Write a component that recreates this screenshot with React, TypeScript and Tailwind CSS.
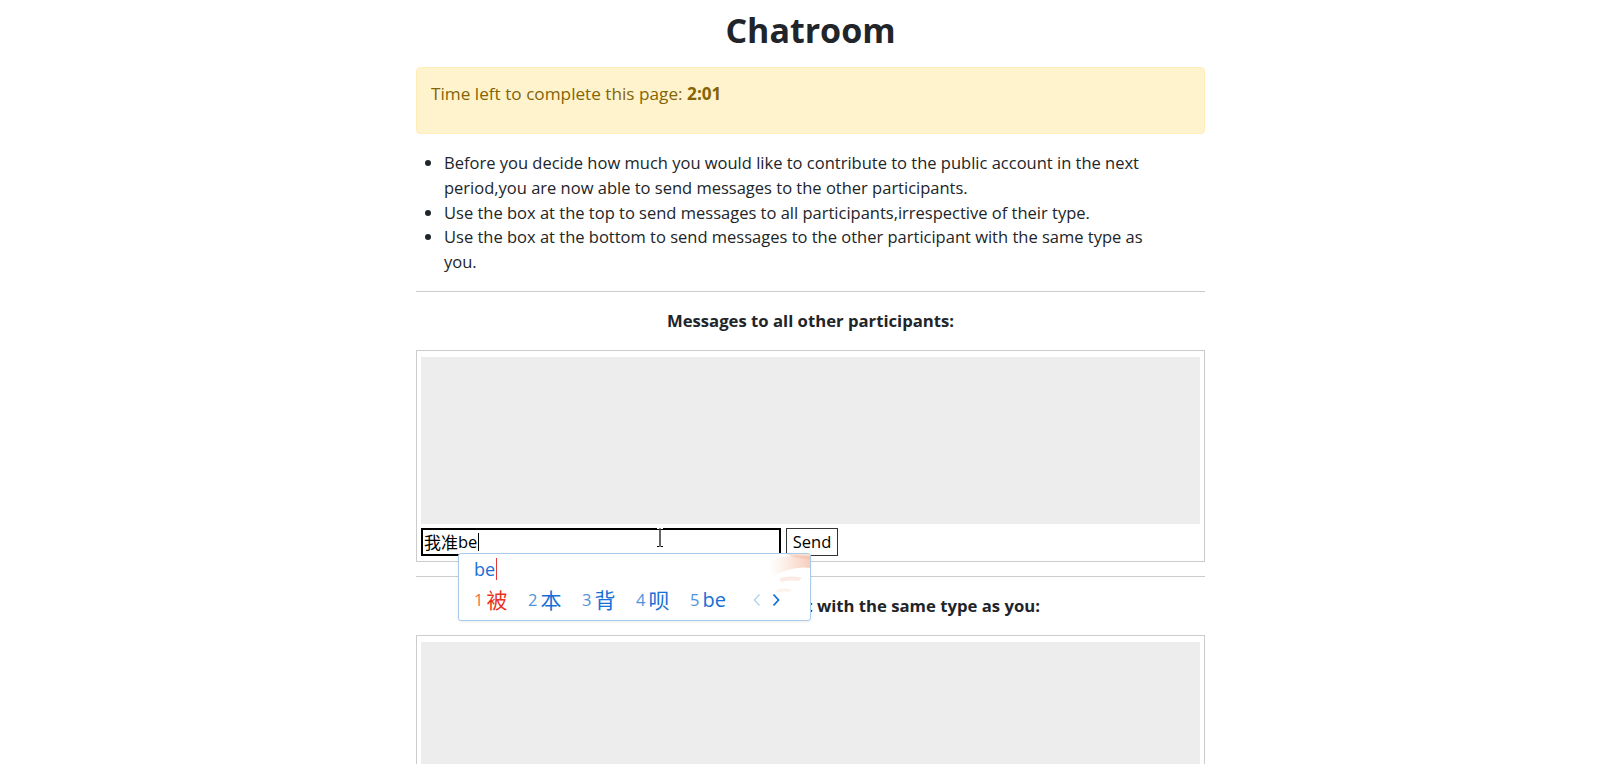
import React from "react";

const FONT = { fontFamily: '"Open Sans", "Noto Sans CJK SC", sans-serif' };

function ChatBox({ children }: { children?: React.ReactNode }) {
  return (
    <div className="border border-[#cccccc] px-[4px] pt-[6px] pb-[5px]">
      <div className="h-[167px] bg-[#ededed]" />
      <div className="mt-[4px] flex items-center gap-[5px]">
        <div className="relative">
          {children}
        </div>
        <button className="h-[28px] w-[52px] border border-[#333] bg-white text-[16.5px] leading-none text-black">
          Send
        </button>
      </div>
    </div>
  );
}

function Candidate({ n, ch, first, latin }: { n: string; ch: string; first?: boolean; latin?: boolean }) {
  return (
    <div className="flex w-[54px] shrink-0 items-center">
      <span className={`mr-[3px] text-[16.5px] leading-none ${first ? "text-[#f0703c]" : "text-[#4f93dc]"}`}>{n}</span>
      <span
        className={`${latin ? "text-[20px] font-medium" : "text-[21px]"} leading-none ${first ? "text-[#e8341c]" : "text-[#1670d6]"}`}
        style={{ fontFamily: latin ? '"Open Sans", sans-serif' : '"Noto Sans CJK SC", "Open Sans", sans-serif' }}
      >
        {ch}
      </span>
    </div>
  );
}

function ImePopup() {
  return (
    <div className="absolute left-[37px] top-[25px] z-10 h-[68px] w-[353px] overflow-hidden rounded-[3px] border border-[#a9cbea] bg-white shadow-[0_1px_3px_rgba(0,0,0,0.08)]">
      <svg className="absolute right-0 top-0" width="60" height="50" viewBox="0 0 60 50">
        <defs>
          <linearGradient id="pk" x1="0" y1="0" x2="1" y2="0">
            <stop offset="0" stopColor="#fbe0d4" stopOpacity="0" />
            <stop offset="0.6" stopColor="#f7cdb9" stopOpacity="0.55" />
            <stop offset="1" stopColor="#f3b9a0" stopOpacity="0.7" />
          </linearGradient>
        </defs>
        <path d="M18 8 C30 2 45 0 60 2 L60 14 C48 12 34 16 24 22 C20 18 16 12 18 8Z" fill="url(#pk)" />
        <path d="M30 24 C38 22 46 22 52 24 L48 27 C42 26 36 27 31 28Z" fill="#f6d8cb" opacity="0.5" />
        <path d="M26 36 C32 34 38 34 42 36 L39 38 C35 37 31 38 27 38Z" fill="#f8e0d6" opacity="0.45" />
        <path d="M36 0 L60 0 L60 6 C52 4 44 4 36 0Z" fill="#f1b39a" opacity="0.4" />
      </svg>
      <div className="relative flex h-[30px] items-center pl-[15px] pt-[1px]">
        <span className="text-[18px] leading-none text-[#1b6fd8]">be</span>
        <span className="ml-[1px] inline-block h-[22px] w-[1px] bg-[#e53935]" />
      </div>
      <div className="relative flex h-[32px] items-center pl-[15px]">
        <Candidate n="1" ch="被" first />
        <Candidate n="2" ch="本" />
        <Candidate n="3" ch="背" />
        <Candidate n="4" ch="呗" />
        <Candidate n="5" ch="be" latin />
        <svg className="ml-[9px]" width="8" height="14" viewBox="0 0 8 14">
          <path d="M6.5 1.5 L1.5 7 L6.5 12.5" fill="none" stroke="#b9d5f1" strokeWidth="1.6" />
        </svg>
        <svg className="ml-[11px]" width="8" height="14" viewBox="0 0 8 14">
          <path d="M1.5 1.5 L6.5 7 L1.5 12.5" fill="none" stroke="#1670d6" strokeWidth="1.8" />
        </svg>
      </div>
    </div>
  );
}

function IBeam() {
  return (
    <svg className="absolute left-[234px] top-[0px] z-10" width="10" height="20" viewBox="0 0 10 20">
      <path d="M2 1.5 H4.5 M5.5 1.5 H8 M5 2 V18 M2 18.5 H4.5 M5.5 18.5 H8" stroke="#fff" strokeWidth="3" fill="none" />
      <path d="M2 1.5 H4.5 M5.5 1.5 H8 M5 2 V18 M2 18.5 H4.5 M5.5 18.5 H8" stroke="#000" strokeWidth="1.2" fill="none" />
    </svg>
  );
}

export default function App() {
  return (
    <div className="min-h-screen bg-white text-[#212529]" style={FONT}>
      <div className="flex justify-center pl-[16px]">
        <div className="w-[789px]">
          <h1 className="mt-[10px] text-center text-[34px] font-bold leading-[40px] text-[#212529]">Chatroom</h1>

          <div className="mt-[17px] rounded-[4px] border border-[#ffeeba] bg-[#fff3cd] pl-[14px] pr-[14px] pt-[13px] pb-[12px] text-[#856404]">
            <p className="mb-[15px] text-[17.2px] leading-[25px]">
              Time left to complete this page: <b>2:01</b>
            </p>
          </div>

          <ul className="mt-[17px] mb-[16px] list-disc pl-[28px] text-[16.5px] leading-[24.8px]">
            <li>
              Before you decide how much you would like to contribute to the public account in the next
              <br />
              period,you are now able to send messages to the other participants.
            </li>
            <li>Use the box at the top to send messages to all participants,irrespective of their type.</li>
            <li>
              Use the box at the bottom to send messages to the other participant with the same type as
              <br />
              you.
            </li>
          </ul>

          <hr className="border-t border-[#cccccc]" />

          <div className="mt-[16px] mb-[17px] text-center text-[16.7px] font-bold leading-[25px]">
            Messages to all other participants:
          </div>

          <ChatBox>
            <div className="flex h-[28px] w-[360px] items-center border-2 border-black bg-white pl-[1px] text-black">
              <span className="text-[17px] leading-none" style={{ fontFamily: '"Noto Sans CJK SC", sans-serif' }}>我准</span>
              <span className="text-[16.5px] leading-none">be</span>
              <span className="ml-[1px] inline-block h-[18px] w-[1px] bg-black" />
            </div>
            <IBeam />
            <ImePopup />
          </ChatBox>

          <hr className="mt-[14px] border-t border-[#cccccc]" />

          <div className="mt-[16px] mb-[17px] text-center text-[16.7px] font-bold leading-[25px]">
            Messages to the participant with the same type as you:
          </div>

          <ChatBox>
            <div className="h-[28px] w-[360px] border border-[#767676] bg-white" />
          </ChatBox>
          <div className="h-[40px]" />
        </div>
      </div>
    </div>
  );
}
